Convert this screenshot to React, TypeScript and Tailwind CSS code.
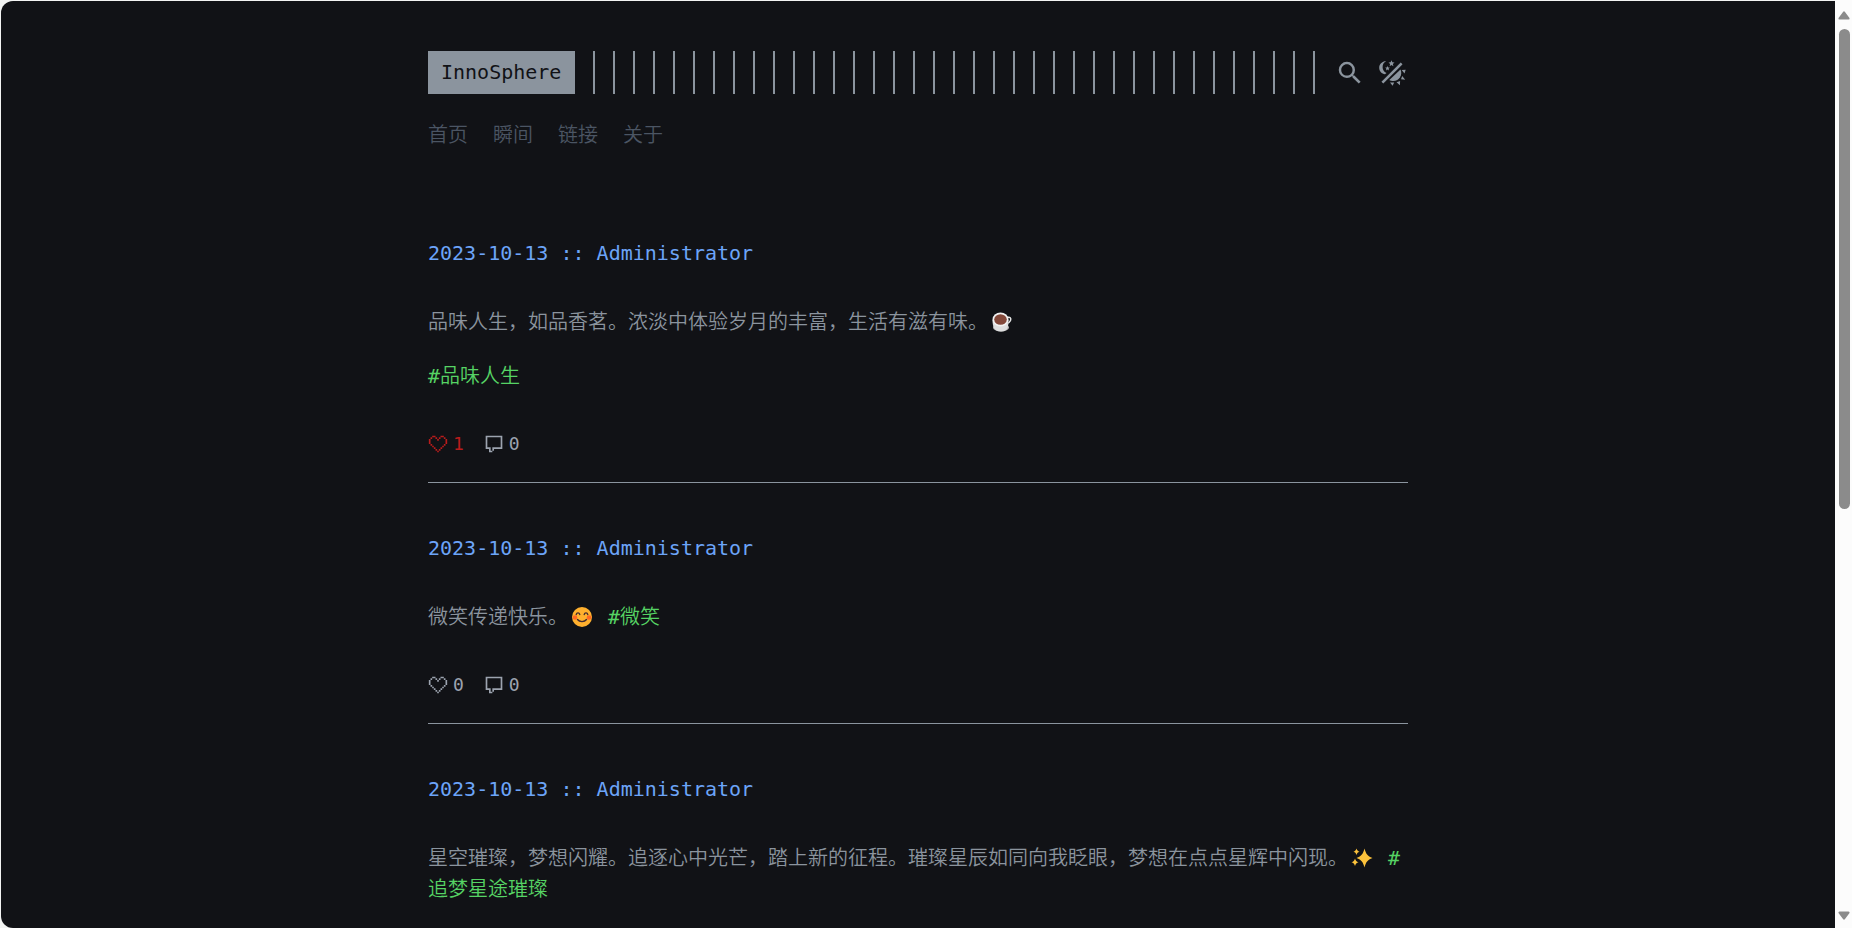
import { ReactNode, useState } from "react";
import { MdSearch } from "react-icons/md";

type Post = {
  id: number;
  date: string;
  author: string;
  body: ReactNode;
  likes: number;
  liked: boolean;
  comments: number;
};

const NAV_LINKS = ["首页", "瞬间", "链接", "关于"];

function Emoji({ label, children }: { label: string; children: ReactNode }) {
  return (
    <svg
      role="img"
      aria-label={label}
      viewBox="0 0 28 20"
      className="inline-block h-5 w-7 align-[-3px]"
    >
      {children}
    </svg>
  );
}

function CoffeeEmoji() {
  return (
    <Emoji label="coffee">
      <path d="M19 5.500c3-1 4.500.5 3.500 3s-2.500 3-4.500 3.500" fill="none" stroke="#e4e4e4" strokeWidth="1.500" />
      <ellipse cx="13" cy="15.500" rx="8" ry="4" fill="#bdbdbd" />
      <path d="M4.500 8c0 7 2 11.500 8.500 11.500S20.500 15 20.500 8z" fill="#dedede" />
      <ellipse cx="12.500" cy="7.500" rx="8" ry="7" fill="#f2f2f2" />
      <ellipse cx="12.500" cy="7.500" rx="6.300" ry="5.300" fill="#83483a" />
    </Emoji>
  );
}

function SmileEmoji() {
  return (
    <Emoji label="smile">
      <circle cx="14" cy="10" r="10" fill="#ffb02e" />
      <circle cx="7" cy="10.500" r="2.300" fill="#ff6723" />
      <circle cx="21" cy="10.500" r="2.300" fill="#ff6723" />
      <path
        d="M8.200 7.500c.6-2.300 3-2.300 3.600 0M16.200 7.500c.6-2.300 3-2.300 3.600 0M9.500 12.500c2 2.800 7 2.800 9 0"
        fill="none"
        stroke="#402a32"
        strokeWidth="1.300"
        strokeLinecap="round"
      />
    </Emoji>
  );
}

function SparklesEmoji() {
  return (
    <Emoji label="sparkles">
      <g fill="#fcc23c">
        <path d="M16.500 0.500c1.600 5.700 2.800 7.400 8 9.500-5.200 2.100-6.400 3.800-8 9.500-1.600-5.700-2.800-7.400-8-9.500 5.200-2.100 6.400-3.800 8-9.500z" />
        <path d="M8.500 0.500c.7 2 1.200 2.500 3 3.200-1.800.7-2.300 1.200-3 3.200-.7-2-1.200-2.500-3-3.200 1.800-.7 2.300-1.200 3-3.200z" />
        <path d="M7 10.500c.8 2.500 1.400 3 3.500 3.800-2.100.8-2.700 1.300-3.500 3.800-.8-2.500-1.400-3-3.500-3.800 2.100-.8 2.700-1.300 3.500-3.800z" />
      </g>
    </Emoji>
  );
}

function HeartIcon() {
  return (
    <svg viewBox="0 0 24 24" fill="currentColor" className="size-5" aria-hidden="true">
      <path
        fillRule="evenodd"
        d="M9 2H5v2H3v2H1v6h2v2h2v2h2v2h2v2h2v2h2v-2h2v-2h2v-2h2v-2h2v-2h2V6h-2V4h-2V2h-4v2h-2v2h-2V4H9V2zm0 2v2h2v2h2V6h2V4h4v2h2v6h-2v2h-2v2h-2v2h-2v2h-2v-2H9v-2H7v-2H5v-2H3V6h2V4h4z"
      />
    </svg>
  );
}

function CommentIcon() {
  return (
    <svg viewBox="0 0 24 24" fill="currentColor" className="size-5" aria-hidden="true">
      <path
        fillRule="evenodd"
        d="M2 2h20v16H12v2h-2v2H6v-4H2V2zm2 2v12h4v4h2v-4h10V4H4z"
      />
    </svg>
  );
}

function ThemeIcon() {
  return (
    <svg viewBox="0 0 30 30" fill="currentColor" className="size-[30px]" aria-hidden="true">
      <path d="M8.200 3C3.800 3.400 1.200 6.300 1.200 9.800S3.800 16 7 16.300L8.500 15C5.800 13.500 4.600 11.800 4.600 9.200S5.800 4.300 8.200 3z" />
      <path d="m13.500 2.300.9 2 2.100.2-1.600 1.500.5 2.200-1.900-1.200-1.900 1.200.5-2.200-1.600-1.500 2.100-.2z" />
      <path d="m9.500 7.900.7 1.600 1.600.1-1.200 1.100.4 1.700-1.500-.9-1.500.9.400-1.700-1.200-1.100 1.600-.1z" />
      <path d="M22.700 6.300 5.300 23.700" stroke="currentColor" strokeWidth="2.600" strokeLinecap="square" />
      <path d="M22.500 11.500c2.500 5.500-1.500 11.500-7 11.500-1.800 0-3.200-.4-4.200-1z" />
      <path d="m23.700 12 4-.2-1.200 3.800zM24.200 18l3 3.800-4.200-.6zM18.500 24.200l3.600-1.200-.2 4.300zM12 24.500h4.200l-1.600 3.200z" />
    </svg>
  );
}

function Tag({ name }: { name: string }) {
  return (
    <a href={`#${name}`} className="text-[#56d364]">
      #{name}
    </a>
  );
}

const POSTS: Post[] = [
  {
    id: 1,
    date: "2023-10-13",
    author: "Administrator",
    body: (
      <>
        <p>
          品味人生，如品香茗。浓淡中体验岁月的丰富，生活有滋有味。
          <CoffeeEmoji />
        </p>
        <p>
          <Tag name="品味人生" />
        </p>
      </>
    ),
    likes: 1,
    liked: true,
    comments: 0,
  },
  {
    id: 2,
    date: "2023-10-13",
    author: "Administrator",
    body: (
      <p>
        微笑传递快乐。
        <SmileEmoji /> <Tag name="微笑" />
      </p>
    ),
    likes: 0,
    liked: false,
    comments: 0,
  },
  {
    id: 3,
    date: "2023-10-13",
    author: "Administrator",
    body: (
      <p>
        星空璀璨，梦想闪耀。追逐心中光芒，踏上新的征程。璀璨星辰如同向我眨眼，梦想在点点星辉中闪现。
        <SparklesEmoji /> <Tag name="追梦星途璀璨" />
      </p>
    ),
    likes: 0,
    liked: false,
    comments: 0,
  },
];

function PostItem({ post }: { post: Post }) {
  const [liked, setLiked] = useState(post.liked);
  const likes = post.likes + (liked ? 1 : 0) - (post.liked ? 1 : 0);

  return (
    <article className="border-b border-[#8b949e] pt-[50px] pb-6">
      <h2>
        <a href={`#post-${post.id}`} className="text-[#6ca4f8]">
          {post.date} :: {post.author}
        </a>
      </h2>
      <div className="mt-[38px] flex flex-col gap-[23px] font-[350]">{post.body}</div>
      <div className="mt-[38px] flex gap-5 text-lg leading-7 text-[#9ca3af]">
        <button
          type="button"
          aria-label="点赞"
          aria-pressed={liked}
          onClick={() => setLiked((current) => !current)}
          className={liked ? "flex items-center gap-[5px] text-[#b91c1c]" : "flex items-center gap-[5px]"}
        >
          <HeartIcon />
          {likes}
        </button>
        <button type="button" aria-label="评论" className="flex items-center gap-[5px]">
          <CommentIcon />
          {post.comments}
        </button>
      </div>
    </article>
  );
}

function ScrollTrack() {
  return (
    <div className="flex w-[17px] shrink-0 flex-col items-center bg-[#fcfcfc] pt-2 pb-[5px]" aria-hidden="true">
      <svg viewBox="0 0 12 14" className="h-[14px] w-3 shrink-0" fill="#8b8b8b">
        <path d="M5 4q1-1.500 2 0l4.500 6q.5 1.500-1 1.500h-9q-1.500 0-1-1.500z" />
      </svg>
      <div className="mt-[7px] min-h-0 flex-1 self-stretch px-[3px]">
        <div className="ml-px h-[54.5%] w-[11px] rounded-full bg-[#8b8b8b]" />
      </div>
      <svg viewBox="0 0 12 14" className="h-[14px] w-3 shrink-0" fill="#8b8b8b">
        <path d="M5 10q1 1.500 2 0l4.500-6q.5-1.500-1-1.500h-9q-1.500 0-1 1.500z" />
      </svg>
    </div>
  );
}

export default function App() {
  return (
    <div className="flex h-screen overflow-hidden bg-[#f3f4f3] font-['DejaVu_Sans_Mono','Noto_Sans_CJK_SC',monospace] text-xl leading-[31px] text-[#8b949e]">
      <div className="mt-px ml-px min-w-0 flex-1 overflow-y-auto rounded-l-xl bg-[#111216] [scrollbar-width:none]">
        <div className="mx-auto max-w-[980px] pt-[50px]">
          <header>
            <div className="flex items-center">
              <a href="#home" className="bg-[#8b949e] py-1.5 pr-3.5 pl-[13px] text-[#111216]">
                InnoSphere
              </a>
              <div className="ml-[18px] min-w-0 flex-1 self-stretch bg-[repeating-linear-gradient(90deg,#8b949e_0_2px,transparent_2px_20px)]" />
              <button type="button" aria-label="搜索" className="ml-4">
                <MdSearch className="size-[30px]" />
              </button>
              <button type="button" aria-label="切换主题" className="ml-[13px]">
                <ThemeIcon />
              </button>
            </div>
            <nav className="mt-[26px] flex gap-[25px] font-[350] text-[#4b5563]">
              {NAV_LINKS.map((label) => (
                <a key={label} href={`#${label}`}>
                  {label}
                </a>
              ))}
            </nav>
          </header>
          <main className="mt-[37px]">
            {POSTS.map((post) => (
              <PostItem key={post.id} post={post} />
            ))}
          </main>
        </div>
      </div>
      <ScrollTrack />
    </div>
  );
}
